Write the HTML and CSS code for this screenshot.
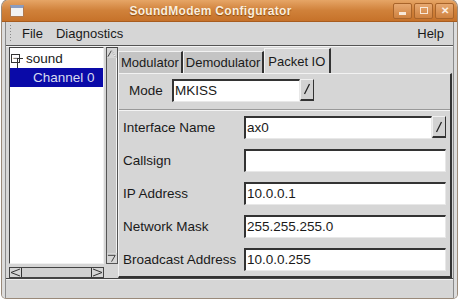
FILE: index.html
```html
<!DOCTYPE html>
<html>
<head>
<meta charset="utf-8">
<link rel="stylesheet" href="styles.css">
</head>
<body>
<div class="window">
  <div class="titlebar">
    <div class="appicon"></div>
    <div class="title">SoundModem Configurator</div>
    <div class="wbtns">
      <div class="wbtn"><span class="min"></span></div>
      <div class="wbtn"><span class="max"></span></div>
      <div class="wbtn"><span class="close">✕</span></div>
    </div>
  </div>
  <div class="frame">
    <div class="menubar">
      <div class="handle"></div>
      <span class="menu">File</span>
      <span class="menu">Diagnostics</span>
      <span class="spacer"></span>
      <span class="menu">Help</span>
    </div>
    <div class="main">
      <div class="leftpane">
        <div class="treerow">
          <div class="tree">
            <div class="node root"><span class="exp">−</span><span class="conn"></span><span class="rtext">sound</span></div>
            <div class="node child sel">Channel 0</div>
          </div>
          <div class="vscroll">
            <div class="arrow up"><svg width="11" height="9" viewBox="0 0 11 9"><path d="M1 8 L5 1 L9 8" fill="none" stroke="#333" stroke-width="1"/><path d="M5 1 L9 8" fill="none" stroke="#fff" stroke-width="1"/></svg></div>
            <div class="trough"></div>
            <div class="arrow down"><svg width="11" height="9" viewBox="0 0 11 9"><path d="M1 1 L9 1 L5 8" fill="none" stroke="#333" stroke-width="1"/></svg></div>
          </div>
        </div>
        <div class="hscroll">
          <div class="harrow"><svg width="11" height="9" viewBox="0 0 11 9"><path d="M10 1 L1 4.5 L10 8" fill="none" stroke="#333" stroke-width="1"/></svg></div>
          <div class="htrough"></div>
          <div class="harrow"><svg width="11" height="9" viewBox="0 0 11 9"><path d="M1 1 L10 4.5 L1 8" fill="none" stroke="#333" stroke-width="1"/></svg></div>
        </div>
      </div>
      <div class="rightpane">
        <div class="tabs">
          <div class="tab">Modulator</div>
          <div class="tab">Demodulator</div>
          <div class="tab active">Packet IO</div>
        </div>
        <div class="panel">
          <div class="moderow">
            <span class="lbl">Mode</span>
            <div class="combo wide">
              <div class="entry">MKISS</div>
              <div class="cbtn"><svg width="8" height="12" viewBox="0 0 8 12"><path d="M1.5 11 L6.5 1" stroke="#222" stroke-width="1.3" fill="none"/></svg></div>
            </div>
          </div>
          <div class="sep"></div>
          <div class="form">
            <span class="lbl">Interface Name</span>
            <div class="combo">
              <div class="entry">ax0</div>
              <div class="cbtn"><svg width="8" height="12" viewBox="0 0 8 12"><path d="M1.5 11 L6.5 1" stroke="#222" stroke-width="1.3" fill="none"/></svg></div>
            </div>
            <span class="lbl">Callsign</span>
            <div class="entry"></div>
            <span class="lbl">IP Address</span>
            <div class="entry">10.0.0.1</div>
            <span class="lbl">Network Mask</span>
            <div class="entry">255.255.255.0</div>
            <span class="lbl">Broadcast Address</span>
            <div class="entry">10.0.0.255</div>
          </div>
        </div>
      </div>
    </div>
    <div class="status"></div>
  </div>
</div>
</body>
</html>
```

FILE: styles.css
```css
html, body {
  margin: 0;
  padding: 0;
  background: #ffffff;
}
body {
  width: 460px;
  height: 303px;
  overflow: hidden;
  font-family: "Liberation Sans", Arial, sans-serif;
  font-size: 13px;
  color: #1a1a1a;
}
.window {
  margin-left: 2px;
  width: 455px;
  height: 298px;
  display: flex;
  flex-direction: column;
  border-radius: 7px 7px 4px 4px;
  overflow: hidden;
  background: #d6d6d6;
  box-shadow: 0 0 0 1px #9a8a7a;
}
.titlebar {
  height: 21px;
  flex: none;
  display: flex;
  align-items: center;
  background: linear-gradient(#e6a566, #d0813a 50%, #c6722a);
  border-bottom: 1px solid #a85c1e;
  position: relative;
}
.appicon {
  width: 12px;
  height: 8px;
  margin-left: 8px;
  background: #f2f2f2;
  border: 1px solid #b07a50;
  border-top: 3px solid #8a9cc0;
}
.title {
  position: absolute;
  left: 0;
  right: 38px;
  text-align: center;
  font-family: "Liberation Sans", Arial, sans-serif;
  font-weight: bold;
  font-size: 12px;
  color: #fbeede;
  text-shadow: 0 1px 1px #8a4a10;
  letter-spacing: 0.3px;
}
.wbtns {
  margin-left: auto;
  margin-right: 3px;
  display: flex;
  gap: 2px;
}
.wbtn {
  width: 17px;
  height: 14px;
  border: 1px solid #a8642a;
  border-radius: 2px;
  background: linear-gradient(#e7a870, #cf8240);
  display: flex;
  align-items: center;
  justify-content: center;
}
.min {
  width: 7px;
  height: 3px;
  margin-top: 5px;
  background: #f8e8d8;
}
.max {
  width: 6px;
  height: 5px;
  border: 1px solid #f8e8d8;
}
.close {
  color: #fbefe4;
  font-size: 10px;
  font-weight: bold;
  line-height: 1;
}
.frame {
  flex: 1;
  display: flex;
  flex-direction: column;
  border-left: 3px solid #dcdcdc;
  border-right: 3px solid #dcdcdc;
  box-shadow: inset 1px 0 0 #8a8a8a, inset -1px 0 0 #8a8a8a;
  padding: 0 1px;
}
.menubar {
  height: 23px;
  flex: none;
  display: flex;
  align-items: center;
  border-bottom: 1px solid #555;
  box-shadow: 0 1px 0 #f4f4f4;
}
.handle {
  width: 4px;
  height: 19px;
  margin-left: 3px;
  margin-right: 5px;
  background-image: radial-gradient(#888 0.8px, transparent 1px);
  background-size: 3px 3px;
}
.menu {
  padding: 0 9px 0 4px;
  font-size: 13px;
}
.spacer { flex: 1; }
.main {
  flex: none;
  height: 232px;
  display: flex;
  border-bottom: 1px solid #444;
}
.leftpane {
  width: 112px;
  flex: none;
  display: flex;
  flex-direction: column;
  padding: 1px 0 0 3px;
  box-sizing: border-box;
}
.treerow {
  display: flex;
  height: 218px;
}
.tree {
  width: 95px;
  box-sizing: border-box;
  background: #ffffff;
  border: 1px solid #444;
  border-right-color: #f0f0f0;
  border-bottom-color: #f0f0f0;
  padding-top: 0;
}
.node {
  height: 19px;
  line-height: 19px;
  white-space: nowrap;
  font-size: 13.5px;
}
.root {
  display: flex;
  align-items: center;
  padding-left: 1px;
  height: 20px;
}
.exp {
  width: 7px;
  height: 7px;
  border: 1px solid #333;
  font-size: 9px;
  line-height: 6px;
  text-align: center;
  flex: none;
}
.conn {
  width: 6px;
  height: 10px;
  border-top: 1px solid #333;
  border-left: 1px solid #333;
  margin-top: 9px;
  margin-left: -3px;
  box-sizing: border-box;
  flex: none;
}
.rtext { margin-left: 3px; }
.child {
  padding-left: 23px;
}
.sel {
  background: #0a0aa8;
  color: #d8dcf0;
}
.vscroll {
  width: 12px;
  margin-left: 2px;
  display: flex;
  flex-direction: column;
  background: #c8c8c8;
  border: 1px solid #555;
  border-top-color: #444;
  box-sizing: border-box;
}
.arrow {
  height: 10px;
  display: flex;
  align-items: center;
  justify-content: center;
  background: #d6d6d6;
}
.trough { flex: 1; border-right: 1px solid #f2f2f2; }
.hscroll {
  margin-top: 3px;
  width: 95px;
  height: 11px;
  display: flex;
  border: 1px solid #444;
  box-sizing: border-box;
  background: #d0d0d0;
}
.harrow {
  width: 11px;
  display: flex;
  align-items: center;
  justify-content: center;
  background: #d6d6d6;
}
.htrough { flex: 1; border-left: 1px solid #333; border-right: 1px solid #333; }
.rightpane {
  flex: 1;
  display: flex;
  flex-direction: column;
  padding-top: 2px;
}
.tabs {
  display: flex;
  align-items: flex-end;
  height: 25px;
  padding-left: 0;
}
.tab {
  height: 21px;
  line-height: 21px;
  padding: 0 2px;
  background: #c4c4c4;
  border-top: 1px solid #f2f2f2;
  border-left: 1px solid #f2f2f2;
  border-right: 2px solid #333;
  font-size: 13px;
}
.tab.active {
  height: 24px;
  line-height: 25px;
  background: #d6d6d6;
  padding: 0 4px 0 3px;
}
.panel {
  flex: 1;
  border-top: 1px solid #f2f2f2;
  border-left: 1px solid #f2f2f2;
  border-right: 2px solid #333;
  border-bottom: 2px solid #333;
  display: flex;
  flex-direction: column;
  margin-right: 1px;
}
.moderow {
  display: flex;
  align-items: center;
  height: 30px;
  padding-left: 10px;
  margin-top: 1px;
}
.moderow .lbl { width: 43px; }
.combo {
  display: flex;
  align-items: stretch;
}
.combo.wide .entry { width: 128px; flex: none; }
.cbtn {
  width: 14px;
  height: 22px;
  box-sizing: border-box;
  border-top: 1px solid #f0f0f0;
  border-left: 1px solid #f0f0f0;
  border-right: 1px solid #333;
  border-bottom: 2px solid #333;
  background: #d2d2d2;
  display: flex;
  align-items: center;
  justify-content: center;
}
.sep {
  height: 0;
  border-top: 1px solid #999;
  border-bottom: 1px solid #f4f4f4;
  margin-top: 4px;
}
.form {
  display: grid;
  grid-template-columns: 121px 202px;
  grid-auto-rows: 23px;
  row-gap: 10px;
  align-items: center;
  padding: 5px 0 0 4px;
}
.lbl {
  font-size: 13.5px;
  white-space: nowrap;
}
.entry {
  height: 23px;
  box-sizing: border-box;
  background: #ffffff;
  border-top: 2px solid #333;
  border-left: 2px solid #333;
  border-right: 1px solid #e8e8e8;
  border-bottom: 1px solid #e8e8e8;
  padding-left: 1px;
  line-height: 20px;
  font-size: 13.5px;
}
.combo .entry { flex: 1; }
.form .combo .entry { width: 188px; }
.status {
  flex: 1;
  border-top: 1px solid #f2f2f2;
}
```
